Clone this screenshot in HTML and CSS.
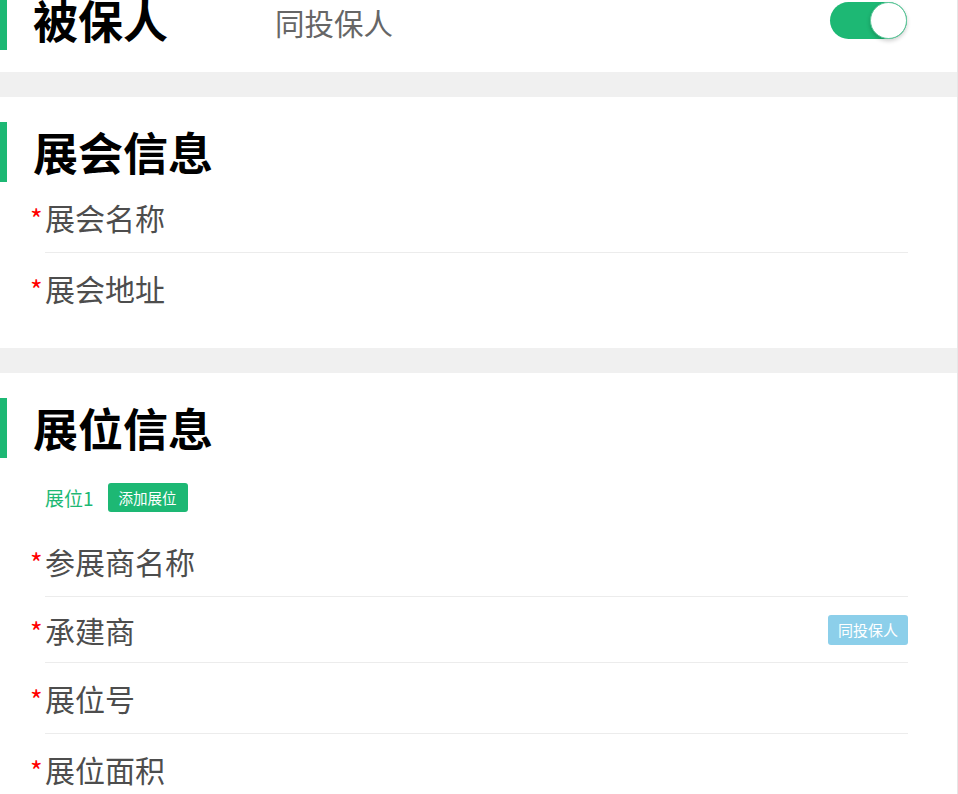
FILE: index.html
```html
<!DOCTYPE html>
<html lang="zh-CN">
<head>
<meta charset="utf-8">
<title>展会保险</title>
<link rel="stylesheet" href="styles.css">
</head>
<body>
<div class="page">
  <section class="card card-first">
    <div class="card-head">
      <h2 class="title title-fixed">被保人</h2>
      <span class="head-note">同投保人</span>
      <span class="toggle"><span class="knob"></span></span>
    </div>
  </section>

  <section class="card">
    <div class="card-head">
      <h2 class="title">展会信息</h2>
    </div>
    <div class="row"><span class="label"><span class="star">*</span>展会名称</span></div>
    <div class="row row-last"><span class="label"><span class="star">*</span>展会地址</span></div>
  </section>

  <section class="card card-open">
    <div class="card-head">
      <h2 class="title">展位信息</h2>
    </div>
    <div class="tabs">
      <span class="tab">展位1</span>
      <span class="btn btn-green">添加展位</span>
    </div>
    <div class="row"><span class="label"><span class="star">*</span>参展商名称</span></div>
    <div class="row row-short"><span class="label"><span class="star">*</span>承建商</span><span class="btn btn-blue">同投保人</span></div>
    <div class="row"><span class="label"><span class="star">*</span>展位号</span></div>
    <div class="row row-last"><span class="label"><span class="star">*</span>展位面积</span></div>
  </section>
</div>
</body>
</html>
```

FILE: styles.css
```css
html, body {
  margin: 0;
  padding: 0;
  background: #fff;
}
body {
  font-family: "Noto Sans CJK SC", "Noto Sans", "Liberation Sans", sans-serif;
  overflow: hidden;
}
.page {
  width: 957px;
  min-height: 794px;
  border-right: 1px solid #e6e6e6;
  background: #f0f0f0;
  display: flex;
  flex-direction: column;
  gap: 25px;
}
.card {
  background: #fff;
  padding: 25px 0 25px;
}
.card-first {
  margin-top: -35px;
  padding-bottom: 22px;
}
.card-open {
  padding-bottom: 0;
  flex: 1;
}
.card-head {
  height: 60px;
  border-left: 7px solid #1db874;
  padding-left: 26px;
  display: flex;
  align-items: center;
  padding-right: 50px;
}
.title {
  margin: 0;
  font-size: 45px;
  font-weight: 700;
  color: #000;
  line-height: 60px;
}
.title-fixed {
  width: 242px;
  flex: none;
}
.head-note {
  font-size: 29.5px;
  color: #666;
  flex: 1;
  padding-top: 4px;
}
.toggle {
  width: 77px;
  height: 37px;
  border-radius: 19px;
  background: #1db874;
  display: flex;
  justify-content: flex-end;
  margin-top: 0;
}
.knob {
  width: 37px;
  height: 37px;
  box-sizing: border-box;
  border-radius: 50%;
  background: #fff;
  border: 1px solid #5fc79b;
  box-shadow: 0 2px 4px rgba(0, 0, 0, 0.2);
}
.row {
  margin-left: 45px;
  margin-right: 49px;
  height: 70px;
  border-bottom: 1px solid #ececec;
  display: flex;
  align-items: center;
  justify-content: space-between;
}
.row-short {
  height: 65px;
}
.row-last {
  border-bottom: none;
}
.label {
  font-size: 30px;
  color: #4d4d4d;
  line-height: 40px;
}
.star {
  display: inline-block;
  width: 15px;
  margin-left: -15px;
  color: #f00;
  font-size: 27px;
  line-height: 1;
}
.tabs {
  display: flex;
  align-items: center;
  gap: 14px;
  padding: 25px 0 14px 45px;
}
.tab {
  font-size: 19px;
  color: #1db874;
  line-height: 29px;
}
.btn {
  display: inline-flex;
  align-items: center;
  justify-content: center;
  width: 80px;
  height: 29px;
  border-radius: 3px;
  color: #fff;
  font-size: 14.5px;
}
.btn-green {
  background: #1db874;
}
.btn-blue {
  background: #8ccfea;
  height: 30px;
  font-size: 15px;
}
```
